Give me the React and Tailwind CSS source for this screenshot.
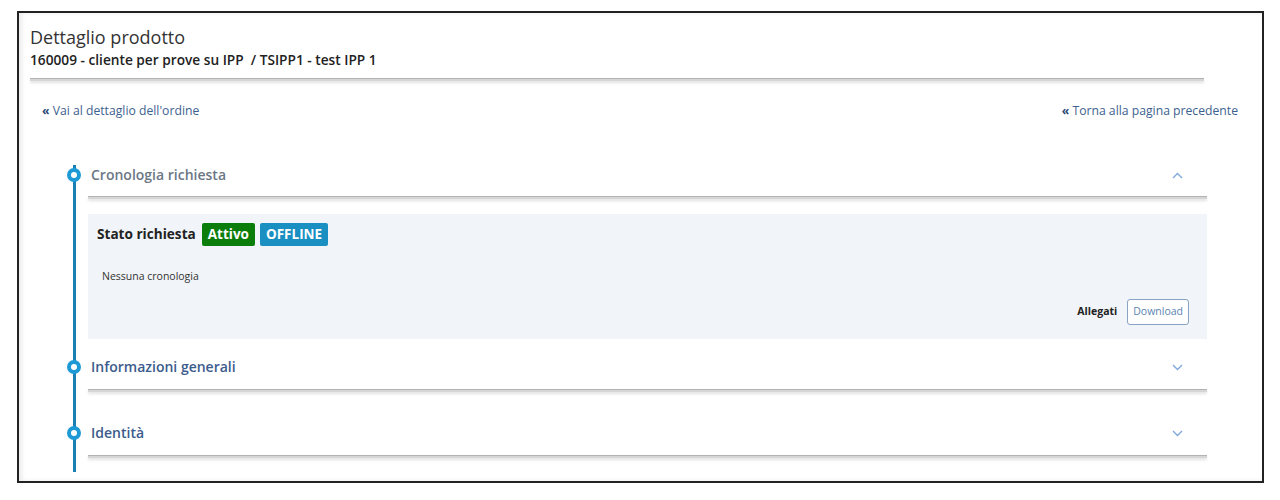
import React from 'react';

const ChevronUp = () => (
  <svg width="11" height="7" viewBox="0 0 11 7" fill="none" stroke="#7fa8dc" strokeWidth="1.4">
    <path d="M1 6 L5.5 1.5 L10 6" />
  </svg>
);

const ChevronDown = () => (
  <svg width="11" height="7" viewBox="0 0 11 7" fill="none" stroke="#7fa8dc" strokeWidth="1.4">
    <path d="M1 1 L5.5 5.5 L10 1" />
  </svg>
);

const Rule = () => (
  <div className="h-[3px] border-t border-[#b3b3b3] bg-[#d6d6d6] shadow-[0_2px_3px_rgba(0,0,0,0.12)]" />
);

const SectionHeader = ({ title, open, color }) => (
  <div className="relative">
    {/* timeline marker */}
    <span className="absolute left-[-21px] top-[3px] w-[14px] h-[14px] rounded-full border-[4px] border-[#1d9ad6] bg-white" />
    <div className="flex items-center justify-between pl-[3px] pr-[24px] h-[20px]">
      <span className={`text-[14px] font-semibold leading-[20px] ${color}`}>{title}</span>
      {open ? <ChevronUp /> : <ChevronDown />}
    </div>
  </div>
);

export default function App() {
  return (
    <div className="w-[1280px] h-[500px] bg-white pt-[11px] pl-[17px] font-['Open_Sans',sans-serif]">
      <div className="w-[1247px] h-[472px] border-2 border-[#222] overflow-hidden shadow-[inset_3px_0_4px_rgba(0,0,0,0.08)] flex flex-col">
        {/* Header */}
        <div className="pl-[11px] pt-[11px] pr-[58px]">
          <h1 className="text-[18px] leading-[26px] text-[#333] m-0">Dettaglio prodotto</h1>
          <div className="mt-[1px] text-[13.7px] leading-[18px] font-semibold text-[#222] whitespace-pre">
            160009 - cliente per prove su IPP  / TSIPP1 - test IPP 1
          </div>
          <div className="mt-[9px]">
            <Rule />
          </div>
        </div>

        {/* Links */}
        <div className="flex justify-between pl-[23px] pr-[24px] mt-[20px] text-[12.2px] leading-[20px] text-[#3d5f8f]">
          <span><b className="text-[#2b4a78]">«</b> Vai al dettaglio dell'ordine</span>
          <span><b className="text-[#2b4a78]">«</b> Torna alla pagina precedente</span>
        </div>

        {/* Timeline */}
        <div className="ml-[54px] mr-[55px] mt-[44px] border-l-[3px] border-[#1a7fb5] pl-[12px] pb-[14px]">
          <SectionHeader title="Cronologia richiesta" open color="text-[#6b7785]" />
          <div className="mt-[11px]">
            <Rule />
          </div>
          <div className="mt-[15px] bg-[#f1f4f8] pl-[9px] pr-[18px] pt-[8px] pb-[14px]">
            <div className="flex items-center h-[24px]">
              <span className="text-[13.6px] font-bold text-[#222]">Stato richiesta</span>
              <span className="ml-[6px] h-[23px] px-[6px] flex items-center rounded-[2px] bg-[#0b7d0b] text-white text-[13.5px] font-bold">Attivo</span>
              <span className="ml-[5px] h-[23px] px-[6px] flex items-center rounded-[2px] bg-[#1a8fc2] text-white text-[13.5px] font-bold">OFFLINE</span>
            </div>
            <div className="mt-[22px] pl-[5px] text-[10.5px] leading-[16px] text-[#333]">Nessuna cronologia</div>
            <div className="mt-[15px] flex items-center justify-end gap-[10px]">
              <span className="text-[10.5px] font-bold text-[#222]">Allegati</span>
              <button className="h-[26px] px-[5px] rounded-[3px] border-[1.5px] border-[#8aa2c4] bg-white text-[10.5px] text-[#5b84b1]">Download</button>
            </div>
          </div>

          <div className="mt-[18px]">
            <SectionHeader title="Informazioni generali" color="text-[#3b5b8c]" />
          </div>
          <div className="mt-[12px]">
            <Rule />
          </div>

          <div className="mt-[31px]">
            <SectionHeader title="Identità" color="text-[#3b5b8c]" />
          </div>
          <div className="mt-[12px]">
            <Rule />
          </div>
        </div>
      </div>
    </div>
  );
}
